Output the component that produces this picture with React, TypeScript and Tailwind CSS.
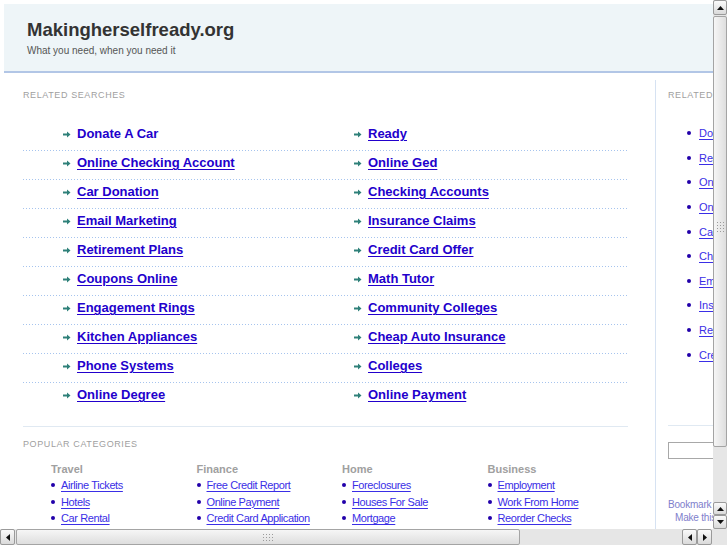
import React from "react";

const left = [
  "Donate A Car",
  "Online Checking Account",
  "Car Donation",
  "Email Marketing",
  "Retirement Plans",
  "Coupons Online",
  "Engagement Rings",
  "Kitchen Appliances",
  "Phone Systems",
  "Online Degree",
];
const right = [
  "Ready",
  "Online Ged",
  "Checking Accounts",
  "Insurance Claims",
  "Credit Card Offer",
  "Math Tutor",
  "Community Colleges",
  "Cheap Auto Insurance",
  "Colleges",
  "Online Payment",
];
const side = [
  "Donate A Car",
  "Ready",
  "Online Checking Account",
  "Online Ged",
  "Car Donation",
  "Checking Accounts",
  "Email Marketing",
  "Insurance Claims",
  "Retirement Plans",
  "Credit Card Offer",
];
const cats = [
  { h: "Travel", items: ["Airline Tickets", "Hotels", "Car Rental"] },
  { h: "Finance", items: ["Free Credit Report", "Online Payment", "Credit Card Application"] },
  { h: "Home", items: ["Foreclosures", "Houses For Sale", "Mortgage"] },
  { h: "Business", items: ["Employment", "Work From Home", "Reorder Checks"] },
];

function Arrow() {
  return (
    <svg width="8" height="7" viewBox="0 0 8 7" className="shrink-0">
      <path d="M0 2.5h4V0.5L7.5 3.5 4 6.5V4.5H0z" fill="#2e8079" />
    </svg>
  );
}

function Bullet() {
  return <span className="inline-block w-[4px] h-[4px] rounded-full bg-[#2200aa] shrink-0" />;
}

function Tri({ dir }: { dir: "up" | "down" | "left" | "right" }) {
  const d =
    dir === "up"
      ? "M0 4L3.5 0 7 4z"
      : dir === "down"
      ? "M0 0L7 0 3.5 4z"
      : dir === "left"
      ? "M4 0L4 7 0 3.5z"
      : "M0 0L4 3.5 0 7z";
  const w = dir === "up" || dir === "down" ? 7 : 4;
  const h = dir === "up" || dir === "down" ? 4 : 7;
  return (
    <svg width={w} height={h} viewBox={`0 0 ${w} ${h}`}>
      <path d={d} fill="#111" />
    </svg>
  );
}

function Btn({ dir, cls }: { dir: "up" | "down" | "left" | "right"; cls: string }) {
  return (
    <div
      className={`flex items-center justify-center border border-[#9a9a9a] rounded-[2px] bg-gradient-to-b from-[#fafafa] to-[#dadada] ${cls}`}
    >
      <Tri dir={dir} />
    </div>
  );
}

function Grip({ vertical }: { vertical: boolean }) {
  const dots = Array.from({ length: 12 });
  return (
    <div className={`grid gap-[2px] ${vertical ? "grid-cols-3" : "grid-cols-4"}`}>
      {dots.map((_, i) => (
        <span key={i} className="w-[1px] h-[1px] bg-[#9a9a9a]" />
      ))}
    </div>
  );
}

export default function App() {
  return (
    <div
      className="relative w-[727px] h-[545px] overflow-hidden bg-white"
      style={{ fontFamily: '"Liberation Sans", Arial, sans-serif' }}
    >
      <div className="flex">
        {/* viewport */}
        <div className="w-[713px] h-[529px] overflow-hidden">
          <div className="w-[940px]">
            {/* header */}
            <div className="mt-[4px] ml-[4px] h-[69px] bg-[#eef5f8] border-b-2 border-[#b2c6e6] pl-[23px] pt-[15px]">
              <div className="text-[18.5px] leading-[21px] font-bold text-[#333333]">Makingherselfready.org</div>
              <div className="text-[10px] leading-[13px] mt-[4px] text-[#555555]">What you need, when you need it</div>
            </div>
            <div className="flex mt-[7px]">
              {/* main */}
              <div className="w-[651px] shrink-0 ml-[4px] pl-[19px] pr-[27px] pt-[10px]">
                <div className="text-[9px] leading-[10px] tracking-[0.6px] text-[#a0a0a0]">RELATED SEARCHES</div>
                <div className="mt-[22px]">
                  {left.map((l, i) => (
                    <div key={l}>
                      <div className="flex h-[28px] pt-[4px]">
                        <div className="w-[331px] shrink-0 pl-[40px] flex items-center gap-[6px] h-[16px]">
                          <Arrow />
                          <span
                            className={`text-[13px] leading-[16px] font-bold text-[#2200cc] ${i === 0 ? "" : "underline"} underline-offset-[2px]`}
                          >
                            {l}
                          </span>
                        </div>
                        <div className="flex items-center gap-[6px] h-[16px]">
                          <Arrow />
                          <span className="text-[13px] leading-[16px] font-bold text-[#2200cc] underline underline-offset-[2px]">
                            {right[i]}
                          </span>
                        </div>
                      </div>
                      {i < left.length - 1 && (
                        <div className="h-[1px] bg-[repeating-linear-gradient(to_right,#a6c4ee_0px,#a6c4ee_1px,transparent_1px,transparent_3px)]" />
                      )}
                    </div>
                  ))}
                </div>
                <div className="mt-[15px] border-t border-[#e0e9f2] pt-[12px]">
                  <div className="text-[9px] leading-[10px] tracking-[0.6px] text-[#a0a0a0]">POPULAR CATEGORIES</div>
                  <div className="flex mt-[13px] pl-[28px]">
                    {cats.map((c) => (
                      <div key={c.h} className="w-[145.5px] shrink-0">
                        <div className="text-[11px] leading-[14px] font-bold text-[#a0a0a0]">{c.h}</div>
                        <div className="mt-[1px]">
                          {c.items.map((it) => (
                            <div key={it} className="flex items-center gap-[6px] h-[16.5px]">
                              <Bullet />
                              <span className="text-[11px] leading-[14px] text-[#3a2ee6] underline underline-offset-[2px] tracking-[-0.4px]">
                                {it}
                              </span>
                            </div>
                          ))}
                        </div>
                      </div>
                    ))}
                  </div>
                </div>
              </div>
              {/* sidebar */}
              <div className="w-[260px] shrink-0 border-l border-[#d6e2f2] pl-[12px] pt-[10px] h-[600px]">
                <div className="text-[9px] leading-[10px] tracking-[0.6px] text-[#a0a0a0]">RELATED SEARCHES</div>
                <div className="mt-[21px] pl-[19px]">
                  {side.map((s) => (
                    <div key={s} className="flex items-center gap-[8px] h-[24.6px]">
                      <Bullet />
                      <span className="text-[11px] leading-[14px] text-[#3a2ee6] underline underline-offset-[2px]">{s}</span>
                    </div>
                  ))}
                </div>
                <div className="mt-[58px] border-t border-[#e0e9f2] pt-[16px]">
                  <div className="w-[200px] h-[17px] border border-[#a8a8a8] bg-white" />
                </div>
                <div className="mt-[39px] text-[10px] leading-[13px] text-[#8080cc] tracking-[-0.2px]">Bookmark this page</div>
                <div className="pl-[7px] text-[10px] leading-[13px] text-[#8080cc] tracking-[-0.2px]">Make this your Homepage</div>
              </div>
            </div>
          </div>
        </div>
        {/* vertical scrollbar */}
        <div className="w-[14px] h-[529px] flex flex-col bg-[#e6e6e6]">
          <Btn dir="up" cls="h-[15px] w-[14px]" />
          <div className="mt-[1px] h-[431px] w-[14px] border border-[#a4a4a4] rounded-[2px] bg-gradient-to-r from-[#f6f6f6] to-[#dedede] flex flex-col items-center">
            <div className="mt-[205px]">
              <Grip vertical />
            </div>
          </div>
          <div className="flex-1" />
          <Btn dir="up" cls="h-[13px] w-[14px]" />
          <Btn dir="down" cls="h-[14px] w-[14px]" />
        </div>
      </div>
      {/* horizontal scrollbar */}
      <div className="flex h-[16px] w-[727px] bg-[#e6e6e6]">
        <Btn dir="left" cls="w-[15px] h-[16px]" />
        <div className="ml-[1px] w-[504px] h-[16px] border border-[#a4a4a4] rounded-[2px] bg-gradient-to-b from-[#f6f6f6] to-[#dedede] flex items-center justify-center">
          <Grip vertical={false} />
        </div>
        <div className="flex-1" />
        <Btn dir="left" cls="w-[15px] h-[16px]" />
        <Btn dir="right" cls="w-[15px] h-[16px]" />
        <div className="w-[15px] h-[16px] bg-[#e6e6e6]" />
      </div>
    </div>
  );
}
